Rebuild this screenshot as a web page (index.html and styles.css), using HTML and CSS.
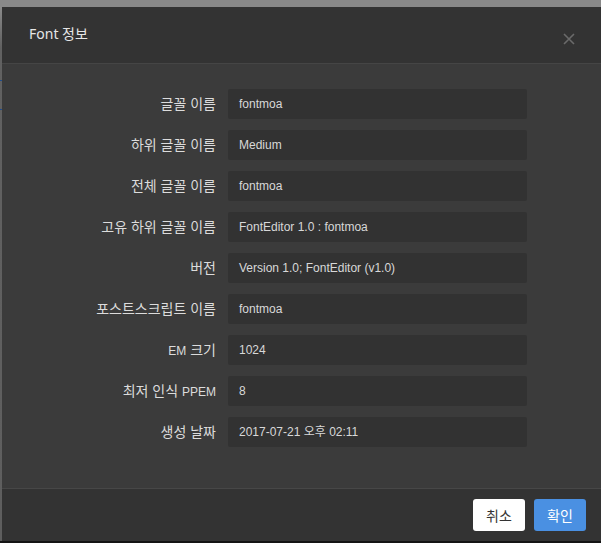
FILE: index.html
```html
<!DOCTYPE html>
<html lang="ko">
<head>
<meta charset="utf-8">
<title>Font 정보</title>
<link rel="stylesheet" href="styles.css">
</head>
<body>
<div class="backdrop">
  <div class="edge"><span class="tick t1"></span><span class="tick t2"></span></div>
  <div class="modal">
    <div class="modal-header">
      <h1 class="title">Font 정보</h1>
      <svg class="close" width="12" height="12" viewBox="0 0 12 12" aria-label="닫기">
        <path d="M1 1 L11 11 M11 1 L1 11" stroke="#6a6a6a" stroke-width="1.6" fill="none"/>
      </svg>
    </div>
    <div class="modal-body">
      <div class="row"><label class="label">글꼴 이름</label><div class="field">fontmoa</div></div>
      <div class="row"><label class="label">하위 글꼴 이름</label><div class="field">Medium</div></div>
      <div class="row"><label class="label">전체 글꼴 이름</label><div class="field">fontmoa</div></div>
      <div class="row"><label class="label">고유 하위 글꼴 이름</label><div class="field">FontEditor 1.0 : fontmoa</div></div>
      <div class="row"><label class="label">버전</label><div class="field">Version 1.0; FontEditor (v1.0)</div></div>
      <div class="row"><label class="label">포스트스크립트 이름</label><div class="field">fontmoa</div></div>
      <div class="row"><label class="label"><span class="en">EM</span> 크기</label><div class="field">1024</div></div>
      <div class="row"><label class="label">최저 인식 <span class="en">PPEM</span></label><div class="field">8</div></div>
      <div class="row"><label class="label">생성 날짜</label><div class="field">2017-07-21 오후 02:11</div></div>
    </div>
    <div class="modal-footer">
      <button class="btn btn-cancel">취소</button>
      <button class="btn btn-ok">확인</button>
    </div>
  </div>
</div>
</body>
</html>
```
FILE: styles.css
```css
html, body {
  margin: 0;
  padding: 0;
  width: 601px;
  height: 543px;
  overflow: hidden;
  background: #141414;
  font-family: "Liberation Sans", "Noto Sans CJK KR", sans-serif;
}
.backdrop {
  display: flex;
  height: 541px;
  padding-top: 7px;
  box-sizing: border-box;
  background: #898989;
}
.edge {
  width: 2px;
  flex: none;
  background: linear-gradient(#8a8a8a 0, #616161 40px, #5e5e5e 100%);
  position: relative;
}
.tick {
  position: absolute;
  left: 0;
  width: 2px;
  height: 1px;
  background: #1f4c8c;
}
.t1 { top: 73px; }
.t2 { top: 102px; }
.modal {
  flex: 1;
  display: flex;
  flex-direction: column;
  background: #3b3b3b;
}
.modal-header {
  height: 57px;
  flex: none;
  display: flex;
  align-items: center;
  justify-content: space-between;
  padding: 0 26px 0 27px;
  background: #333333;
  border-bottom: 1px solid #454545;
  box-sizing: border-box;
}
.title {
  margin: 0;
  font-family: "Noto Sans", "Noto Sans CJK KR", sans-serif;
  font-size: 14px;
  font-weight: normal;
  color: #e6e6e6;
  position: relative;
  top: -2px;
}
.close {
  display: block;
  position: relative;
  top: 4px;
}
.modal-body {
  flex: 1;
  padding-top: 25px;
  display: flex;
  flex-direction: column;
  gap: 11px;
}
.row {
  display: grid;
  grid-template-columns: 214px 299px;
  column-gap: 12px;
  align-items: center;
  height: 30px;
}
.label {
  text-align: right;
  font-size: 14px;
  line-height: 20px;
  color: #dcdcdc;
}
.en {
  font-size: 12px;
}
.field {
  height: 30px;
  line-height: 30px;
  padding-left: 11px;
  background: #323232;
  border-radius: 2px;
  font-size: 12px;
  color: #d8d8d8;
}
.modal-footer {
  height: 53px;
  flex: none;
  display: flex;
  justify-content: flex-end;
  align-items: flex-start;
  gap: 9px;
  padding: 10px 15px 0 0;
  box-sizing: border-box;
  background: #333333;
  border-top: 1px solid #474747;
}
.btn {
  width: 52px;
  height: 32px;
  border: none;
  border-radius: 3px;
  font-family: "Noto Sans CJK KR", sans-serif;
  font-size: 14px;
  padding: 0;
}
.btn-cancel {
  background: #ffffff;
  color: #333333;
}
.btn-ok {
  background: #4a90e2;
  color: #ffffff;
}
```
